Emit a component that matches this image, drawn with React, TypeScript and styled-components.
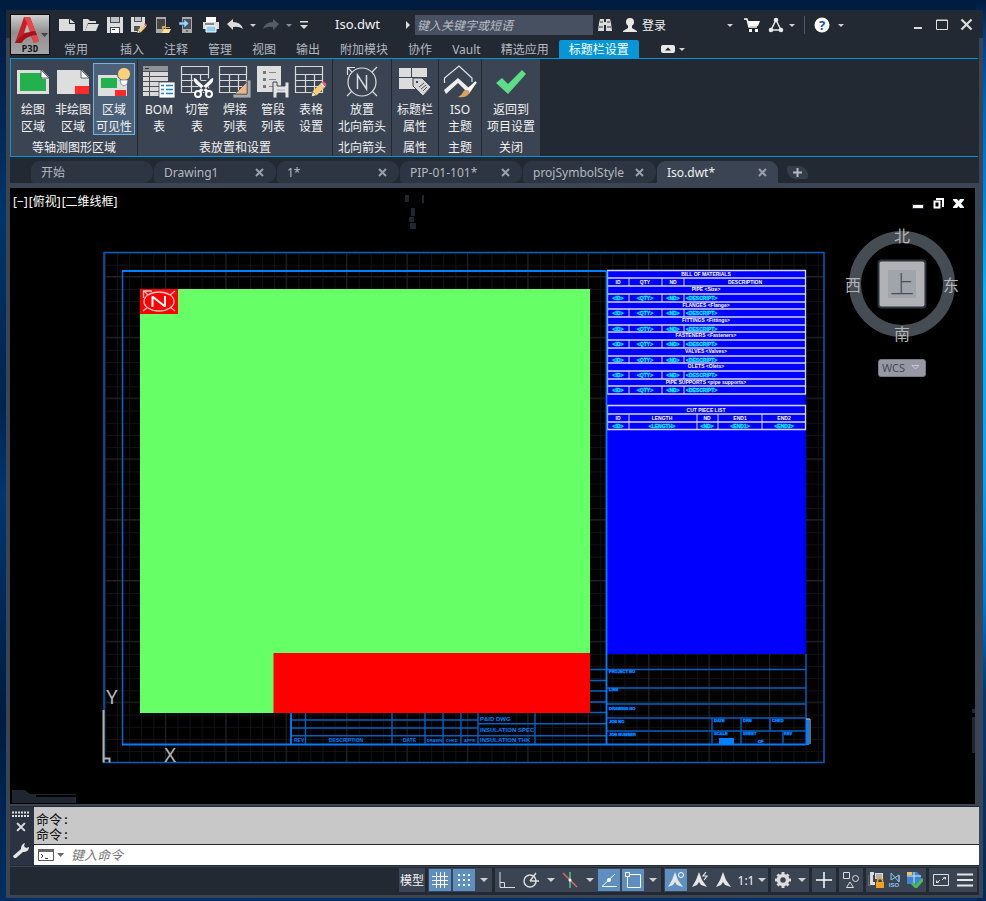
import React from "react";
import styled, { createGlobalStyle, css } from "styled-components";

const c = {
  dark: "#222933",
  panel: "#3b4453",
  accent: "#0696d7",
  tab: "#2d3542",
  select: "#5f8ec1",
  text: "#f2f2f2",
  muted: "#b4b9c0",
  icon: "#dcdcdc",
};

const sans = `"Noto Sans", "Noto Sans CJK SC", sans-serif`;

const GlobalStyle = createGlobalStyle`
  * { box-sizing: border-box; }
  body { margin: 0; font-family: ${sans}; font-size: 12px; color: ${c.text}; }
  button, input { font: inherit; color: inherit; }
  button { border: 0; padding: 0; margin: 0; background: none; cursor: pointer; white-space: nowrap; }
  svg { display: block; flex: none; }
`;

const Desktop = styled.div`
  min-height: 100vh;
  display: flex;
  flex-direction: column;
  padding: 10px 3px 3px 6px;
  background:
    linear-gradient(180deg, #001c40 0, #003a78 30px, #0062b5 100px, #0080dc 190px, #00b4f4 290px, #0a9ff0 480px, #0078d0 600px, #003a78 690px, #002a5c 100%) right / 10px 100% no-repeat,
    linear-gradient(180deg, #001c3f 0, #002350 10%, #003568 24%, #002450 45%, #01366e 55%, #001b40 80%, #002f63 100%);
`;

const Window = styled.main`
  flex: 1;
  display: flex;
  flex-direction: column;
  padding: 0 4px 3px;
  background: linear-gradient(${c.dark} 28px, ${c.panel} 28px);
`;

const Header = styled.header`
  display: flex;
  height: 48px;
  background: ${c.dark};
`;

const AppButton = styled.button`
  width: 40px;
  height: 41px;
  margin-top: 4px;
  border: 1px solid #0b0d10;
  background: linear-gradient(#d0d0d0, #8f8f8f 45%, #a5a5a5);
`;

const HeaderRows = styled.div`
  flex: 1;
  display: flex;
  flex-direction: column;
  justify-content: space-between;
  padding-left: 4px;
  min-width: 0;
`;

const TitleRow = styled.div`
  display: flex;
  align-items: center;
  height: 30px;
`;

const Tools = styled.div<{ $start?: number }>`
  display: flex;
  align-items: center;
  margin-left: ${(p) => p.$start ?? 0}px;
`;

const ToolButton = styled.button<{ $w?: number }>`
  display: flex;
  align-items: center;
  justify-content: center;
  width: ${(p) => p.$w ?? 24}px;
  height: 24px;
`;

const DocTitle = styled.h1`
  margin: 0 0 2px 23px;
  width: 65px;
  font-size: 13px;
  line-height: 20px;
  font-weight: 400;
`;

const Search = styled.input`
  width: 178px;
  height: 20px;
  padding: 0 2px;
  border: 0;
  border-radius: 0;
  background: #475060;
  font-style: italic;
  outline: 0;
  &::placeholder { color: #b9bec6; opacity: 1; }
`;

const SignIn = styled.button`
  display: flex;
  align-items: center;
  gap: 5px;
  width: 56px;
  margin-left: 6px;
`;

const Divider = styled.span`
  width: 1px;
  height: 18px;
  background: #4c586b;
`;

const WindowControls = styled.div`
  display: flex;
  align-items: center;
  margin: 0 1px 2px auto;
`;

const MenuTabs = styled.nav`
  display: flex;
  align-items: stretch;
  height: 18px;
`;

const MenuTab = styled.button<{ $active?: boolean; $wide?: boolean }>`
  padding: 0 10px;
  margin-right: ${(p) => (p.$wide ? 12 : 0)}px;
  line-height: 20px;
  color: ${(p) => (p.$active ? "#fff" : c.muted)};
  background: ${(p) => (p.$active ? c.accent : "transparent")};
  border-radius: 2px 2px 0 0;
`;

const Ribbon = styled.section`
  display: flex;
  gap: 1px;
  width: calc(100% - 1px);
  border: 1px solid ${c.accent};
  border-right: 0;
  background: ${c.dark};
  box-shadow: 1px 0 0 ${c.dark};
`;

const Panel = styled.div`
  display: flex;
  flex-direction: column;
  align-items: center;
  padding: 4px 2px 0;
  height: 97px;
  background: ${c.panel};
`;

const PanelButtons = styled.div`
  display: flex;
`;

const PanelTitle = styled.div`
  margin-top: 4px;
  line-height: 17px;
`;

const RibbonButton = styled.button<{ $w: number; $on?: boolean }>`
  display: flex;
  flex-direction: column;
  align-items: center;
  width: ${(p) => p.$w}px;
  height: 72px;
  padding-top: 1px;
  line-height: 17px;
  border: 1px solid ${(p) => (p.$on ? "#6cb4e8" : "transparent")};
  background: ${(p) => (p.$on ? "#4b6079" : "transparent")};
  svg { margin-bottom: 4px; overflow: visible; }
`;

const FileTabs = styled.nav`
  display: flex;
  align-items: flex-end;
  height: 26px;
  padding-left: 20px;
  background: ${c.dark};
`;

const FileTab = styled.div<{ $w: number; $active?: boolean }>`
  display: flex;
  align-items: center;
  justify-content: space-between;
  width: ${(p) => p.$w}px;
  height: 22px;
  padding: 0 12px 0 10px;
  border-left: 1px solid ${c.dark};
  border-radius: 9px 10px 10px 4px;
  background: ${c.tab};
  color: ${c.muted};
  ${(p) =>
    p.$active &&
    css`
      background: ${c.panel};
      color: #f0f0f0;
      border-radius: 9px 9px 0 0;
      padding-right: 11px;
    `}
`;

const TabName = styled.button`
  line-height: 22px;
  padding-top: 2px;
`;

const TabClose = styled.button`
  display: flex;
  width: 10px;
  justify-content: center;
`;

const NewTab = styled.button`
  display: flex;
  align-items: center;
  justify-content: center;
  width: 21px;
  height: 13px;
  margin: 0 0 4px 9px;
  border-radius: 2px 9px 2px 9px;
  background: #343d4a;
`;

const Workspace = styled.section`
  flex: 1;
  position: relative;
  min-height: 400px;
  margin: 5px 4px 2px 0;
  background: #000;
`;

const Drawing = styled.svg`
  position: absolute;
  inset: 0;
  width: 100%;
  height: 100%;
`;

const ViewLabels = styled.div`
  position: absolute;
  top: 5px;
  left: 3px;
  display: flex;
  gap: 1px;
  button { line-height: 18px; color: #fff; }
`;

const ViewControls = styled.div`
  position: absolute;
  top: 8px;
  right: 7px;
  display: flex;
  button { width: 20px; height: 16px; }
`;

const Compass = styled.div`
  position: absolute;
  top: 32px;
  right: 15px;
  display: flex;
  flex-direction: column;
  align-items: center;
`;

const Wcs = styled.button`
  display: flex;
  align-items: center;
  justify-content: space-between;
  width: 48px;
  height: 18px;
  margin-top: 15px;
  padding: 0 5px 2px 3px;
  font-size: 11px;
  border: 1px solid #777884;
  border-radius: 3px;
  background: #9798a4;
  color: #484a52;
`;

const Command = styled.section`
  display: flex;
  height: 60px;
  border: solid ${c.dark};
  border-width: 1px 0 1px 0;
`;

const CommandHandle = styled.div`
  display: flex;
  flex-direction: column;
  align-items: center;
  gap: 5px;
  width: 24px;
  padding: 4px 3px 6px 0;
  background: #2c3340;
  button { display: flex; }
  button:last-child { margin-top: auto; }
`;

const CommandBody = styled.div`
  flex: 1;
  display: flex;
  flex-direction: column;
  color: #111;
`;

const History = styled.div`
  height: 37px;
  padding: 5px 2px 0;
  font: 13px/15px "DejaVu Sans Mono", "Noto Sans CJK SC", monospace;
  background: #c8c8c8;
`;

const Prompt = styled.label`
  display: flex;
  align-items: center;
  height: 21px;
  border-top: 1px solid ${c.dark};
  padding-left: 4px;
  gap: 7px;
  background: #fff;
`;

const CommandInput = styled.input`
  flex: 1;
  border: 0;
  padding: 0;
  outline: 0;
  height: 18px;
  font-size: 13px;
  font-style: italic;
  background: transparent;
  &::placeholder { color: #777; opacity: 1; }
`;

const StatusBar = styled.footer`
  display: flex;
  justify-content: flex-end;
  align-items: center;
  gap: 3px;
  height: 28px;
  margin-top: 1px;
  padding: 0 2px 2px 0;
  background: ${c.dark};
`;

const StatusGroup = styled.div`
  display: flex;
  align-items: center;
  gap: 2px;
  height: 24px;
  padding: 0 1px;
  background: ${c.panel};
`;

const StatusButton = styled.button<{ $w?: number; $on?: boolean }>`
  display: flex;
  align-items: center;
  justify-content: center;
  width: ${(p) => p.$w ?? 22}px;
  height: 22px;
  background: ${(p) => (p.$on ? c.select : "transparent")};
`;

const Caret = ({ s = 3, color = "#d0d0d0" }: { s?: number; color?: string }) => (
  <svg width={s * 2} height={s} viewBox="0 0 6 3">
    <path d="M0 0h6L3 3z" fill={color} />
  </svg>
);

const Glyph = ({ w = 16, h = 16, children }: { w?: number; h?: number; children: React.ReactNode }) => (
  <svg width={w} height={h} viewBox={`0 0 ${w} ${h}`} fill="none">
    {children}
  </svg>
);

const Pencil = ({ x, y, k = 1 }: { x: number; y: number; k?: number }) => (
  <g transform={`translate(${x} ${y}) scale(${k})`}>
    <path d="M0 16 1.5 10.5 5.5 14.5z" fill="#f4ead5" stroke="#333" strokeWidth=".8" />
    <path d="M1.5 10.5 9 3l4 4-7.500 7.500z" fill="#f7cf73" />
    <path d="M9 3 10.500 1.500l4 4L13 7z" fill="#e8e8e8" />
    <path d="M10.500 1.500Q12 0 13.500 1l1.500 1.500Q16 4 14.500 5.500z" fill="#f25b66" />
  </g>
);

const quick: { name: string; icon: React.ReactNode }[] = [
  { name: "新建", icon: <Glyph><path d="M0 2h10v5h6v7H0z" fill={c.icon} /><path d="M11 2l5 4h-5z" fill={c.icon} /></Glyph> },
  { name: "打开", icon: <Glyph><path d="M0 14V2h5l2 2h6v2H5L2 14z" fill={c.icon} /><path d="M5 7h11l-3 7H2z" fill={c.icon} /></Glyph> },
  { name: "保存", icon: <Glyph><path d="M0 0h16v16H0z" fill={c.icon} /><path d="M3 0h10v6H3zM3 10h10v6H3z" fill="#424a55" /><path d="M4 0h8v5H4z" fill="#bfc1c4" /><path d="M4 11h8v5H4z" fill="#fff" /><path d="M5 12.500h3" stroke="#333" /></Glyph> },
  { name: "另存为", icon: <Glyph><path d="M0 0h14v7l-6 8H0z" fill={c.icon} /><path d="M3 0h8v5H3zM3 9h6v5H3z" fill="#4d555f" /><path d="M4 0h6v4H4z" fill="#bfc1c4" /><Pencil x={6} y={6} k={0.65} /></Glyph> },
  { name: "从移动设备打开", icon: <Glyph><path d="M1 0h10v16H1z" fill="#aaa" /><path d="M2 2h8v10H2z" fill="#444" /><path d="M7 9h3l1 1h4v1H9l-2 5z" fill="#d8a95b" /><path d="M9 12h7l-2 4H7z" fill="#ffdd9b" /></Glyph> },
  { name: "保存到移动设备", icon: <Glyph><path d="M3 0h10v16H3z" fill="#aaa" /><path d="M4 2h8v10H4z" fill="#4b5058" /><path d="M0 5h5V2l5 4.500L5 11V8H0z" fill="#9bd5fa" stroke="#1b4c7a" strokeWidth=".6" /><path d="M7 14h2" stroke="#333" /></Glyph> },
  { name: "打印", icon: <Glyph><path d="M3 0h10v5H3z" fill="#fff" /><path d="M0 5h16v7H0z" fill={c.icon} /><path d="M2 7h9" stroke="#333" /><path d="M3 9h10v6H3z" fill="#8fcdf7" stroke="#fff" /></Glyph> },
  { name: "放弃", icon: <Glyph><path d="M0 7 6 2v3q8 0 10 7-4-3-10-2v3z" fill={c.icon} /></Glyph> },
];

const TableIcon = () => (
  <g stroke="#d9d9d9" strokeWidth="1.200">
    <path d="M.5 1.500h27v26H.5zM.5 9.500h27M.5 15.500h27M.5 21.500h27M10.500 9.500v18M19.500 9.500v18" fill="none" />
  </g>
);

const icons = {
  draw: <Glyph w={32} h={32}><path d="M0 5h25l7 7v17H0z" fill="#dedede" /><path d="M3 8h22v6h4v12H3z" fill="#22b14c" /><path d="M24 5v8h8z" fill="#fff" stroke="#3b4453" strokeWidth=".8" /></Glyph>,
  nodraw: <Glyph w={32} h={32}><path d="M0 5h25l7 7v17H0z" fill="#dedede" /><path d="M18 21h14v8H18z" fill="#ff2a2a" /><path d="M24 5v8h8z" fill="#fff" stroke="#3b4453" strokeWidth=".8" /></Glyph>,
  visible: <Glyph w={32} h={32}><path d="M0 10h29v21H0z" fill="#dedede" /><path d="M3 13h16v10H3z" fill="#22b14c" /><path d="M17 25h11v6H17z" fill="#ff2a2a" /><circle cx="26" cy="9" r="6.500" fill="#ffd07a" stroke="#4b6079" /><path d="M22 15h8l-1 4-3 2-3-2z" fill="#fff" stroke="#4b6079" strokeWidth=".6" /></Glyph>,
  bom: <Glyph w={32} h={32}><path d="M0 1h25v30H0z" fill="#d9d9d9" /><path d="M0 1h25v5H0z" fill="#8e9197" /><path d="M0 6.500h25M0 11.500h25M0 16.500h25M0 21.500h25M0 26.500h25M6.500 6v25" stroke="#4a4f58" /><path d="M2 3.500h4" stroke="#333" /><path d="M16 17h16v16H16z" fill="#fff" stroke="#3b4453" strokeWidth=".8" /><path d="M18 20.500h3M18 24.500h3M18 28.500h3M23 20.500h7M23 24.500h7M23 28.500h7" stroke="#1982cf" strokeWidth="1.500" /></Glyph>,
  cut: <Glyph w={32} h={32}><TableIcon /><g stroke="#3b4453" strokeWidth="6"><path d="M14 14l13 13M31 14 18 27" /></g><path d="M13 13q2 0 4 3l11 10-2 2L15 19q-3-3-2-6zM32 13q-2 0-4 3L17 26l2 2 11-9q3-3 2-6z" fill="#fff" /><circle cx="17" cy="29" r="3" stroke="#fff" strokeWidth="2" fill={c.panel} /><circle cx="28" cy="29" r="3" stroke="#fff" strokeWidth="2" fill={c.panel} /></Glyph>,
  weld: <Glyph w={32} h={32}><TableIcon /><path d="M28 15h4v18H14v-4h14z" fill="#aaa" stroke="#3b4453" strokeWidth=".8" /><path d="M28 17v12H16z" fill="#f0b489" stroke="#3b4453" strokeWidth=".6" /></Glyph>,
  spool: <Glyph w={32} h={32}><path d="M0 1h24v26H0z" fill="#dedede" /><path d="M6 6h3v3H6zM6 13h3v3H6zM6 20h3v3H6z" fill="#777" /><path d="M12 7.500h7M12 14.500h7M12 21.500h4" stroke="#888" /><path d="M16 17h4v4h8v-4h4v16h-4v-5h-8v5h-4z" fill="#e3e3e3" stroke="#3b4453" /><path d="M20 25h8" stroke="#aaa" /></Glyph>,
  tableSet: <Glyph w={32} h={32}><TableIcon /><Pencil x={16} y={16} /></Glyph>,
  north: <Glyph w={32} h={32}><g stroke="#dcdcdc" strokeWidth="1.200"><circle cx="16" cy="17" r="14" /><path d="M1.500 10V2.500H9M26 7l5-5M1 31l5-5M31 31l-5-5M2 3l4 4" /><path d="M11.500 24V10l9 14V10" strokeWidth="1.500" /></g></Glyph>,
  title: <Glyph w={32} h={32}><path d="M0 3h12v9H0zM13 3h15v9H13zM0 13h17v11H0z" fill="#dcdcdc" /><path d="M14 13h9l9 9-8 9-10-10z" fill="#d6d6d6" stroke={c.panel} /><path d="M17 16h2v2h-2z" fill={c.panel} /><path d="M20 22l5-4M22 24l5-4M24 26l4-4" stroke="#555" /></Glyph>,
  iso: <Glyph w={32} h={32}><path d="M.5 18V13L15 1l13 12v4" stroke="#e4e4e4" strokeWidth="1.200" /><path d="M0 25 14 13l11 10-3 3-8-8L2 29z" fill="#eee" /><path d="M32 17 23 25l2 2z" fill="#fff" stroke="#fff" strokeWidth="2" /><path d="M24 25q3 2 0 5-3 3-10 2 4-2 5-5 2-3 5-2z" fill="#d9a45f" /></Glyph>,
  check: <Glyph w={32} h={32}><path d="M1 18l6-5 6 6L27 5l4 4-18 20z" fill="#5fdc88" /></Glyph>,
};

type Btn = { l: [string, string]; icon: React.ReactNode; w: number; on?: boolean };
const panels: { title: string; buttons: Btn[] }[] = [
  { title: "等轴测图形区域", buttons: [
    { l: ["绘图", "区域"], icon: icons.draw, w: 40 },
    { l: ["非绘图", "区域"], icon: icons.nodraw, w: 40 },
    { l: ["区域", "可见性"], icon: icons.visible, w: 42, on: true },
  ] },
  { title: "表放置和设置", buttons: [
    { l: ["BOM", "表"], icon: icons.bom, w: 38 },
    { l: ["切管", "表"], icon: icons.cut, w: 38 },
    { l: ["焊接", "列表"], icon: icons.weld, w: 38 },
    { l: ["管段", "列表"], icon: icons.spool, w: 38 },
    { l: ["表格", "设置"], icon: icons.tableSet, w: 38 },
  ] },
  { title: "北向箭头", buttons: [{ l: ["放置", "北向箭头"], icon: icons.north, w: 54 }] },
  { title: "属性", buttons: [{ l: ["标题栏", "属性"], icon: icons.title, w: 42 }] },
  { title: "主题", buttons: [{ l: ["ISO", "主题"], icon: icons.iso, w: 38 }] },
  { title: "关闭", buttons: [{ l: ["返回到", "项目设置"], icon: icons.check, w: 54 }] },
];

const menu = ["常用", "插入", "注释", "管理", "视图", "输出", "附加模块", "协作", "Vault", "精选应用", "标题栏设置"];

const files = [
  { name: "开始", w: 123 },
  { name: "Drawing1", w: 123 },
  { name: "1*", w: 123 },
  { name: "PIP-01-101*", w: 123 },
  { name: "projSymbolStyle", w: 134 },
  { name: "Iso.dwt*", w: 122 },
];

const bomRows = [
  "BILL OF MATERIALS", "", "PIPE <Size>", "", "FLANGES <Flange>", "", "FITTINGS <Fittings>", "",
  "FASTENERS <Fasteners>", "", "VALVES <Valves>", "", "OLETS <Olets>", "", "PIPE SUPPORTS <pipe supports>", "",
];
const rowY = [271, 278, 286, 294, 302, 309, 317, 325, 332, 340, 348, 356, 363, 371, 379, 386, 394];

const IsoDrawing = () => (
  <Drawing viewBox="10 188 965 616" preserveAspectRatio="xMidYMid meet">
    <defs>
      <pattern id="minor" x="105" y="252.600" width="12.080" height="12.160" patternUnits="userSpaceOnUse">
        <path d="M0 .5H13M.5 0V13" stroke="#121216" />
      </pattern>
      <pattern id="major" x="104.500" y="276" width="60.400" height="60.800" patternUnits="userSpaceOnUse">
        <path d="M0 .5H61M.5 0V61" stroke="#222226" />
      </pattern>
    </defs>
    <path fill="url(#minor)" d="M104 252h720v510H104z" />
    <path fill="url(#major)" d="M104 252h720v510H104z" />
    <path d="M104 252.500h720v510H104z" fill="none" stroke="#0060c0" strokeWidth="1.500" />
    <path d="M122.500 271V744" stroke="#0068d0" strokeWidth="1.500" />
    <path d="M122 271H607M122 744.500H806" stroke="#0080ff" strokeWidth="2" />
    <path fill="#66ff66" d="M140 289h450v424H140z" />
    <path fill="#f00" d="M273.500 653H590v60H273.500z" />

    <path fill="#f00" d="M140 289h38v25h-38z" />
    <g stroke="#ffc4c4" fill="none" strokeWidth="1.300">
      <ellipse cx="159" cy="301.500" rx="15" ry="9.500" />
      <path d="M143.500 298v-7H152M170 295l5-4M143 311l5-4M175 311l-5-4M144 291l4 4" />
      <path d="M152.500 307V296.500L165 306.500V296" stroke="#fff" strokeWidth="2" strokeLinejoin="bevel" />
    </g>

    <path fill="#00f" d="M606 270h200v384H606z" />
    <g stroke="#d5d5ff" fill="none">
      <path d="M607.500 270.500H805.500V394H607.500zM607.500 405.500H805.500V429.500H607.500zM607 414H806M607 422H806" strokeWidth="1.300" />
      {rowY.slice(1, -1).map((y) => <path key={y} d={`M607 ${y}H806`} strokeWidth="1.300" />)}
      {rowY.filter((_, i) => i % 2 === 1).map((y) => <path key={y} d={`M629 ${y}v8M662 ${y}v8M684 ${y}v8`} />)}
      <path d="M629 414v16M697 414v16M718 414v16M762 414v16" />
    </g>
    <g fill="#fff" fontFamily="Liberation Sans" fontSize="5" fontWeight="700" textAnchor="middle">
      {bomRows.map((t, i) => t && <text key={t} x="706" y={rowY[i] + 5}>{t}</text>)}
      <text x="618" y="284">ID</text><text x="645" y="284">QTY</text><text x="673" y="284">ND</text><text x="745" y="284">DESCRIPTION</text>
      <text x="706" y="412">CUT PIECE LIST</text>
      <text x="618" y="420">ID</text><text x="662" y="420">LENGTH</text><text x="707" y="420">ND</text><text x="740" y="420">END1</text><text x="784" y="420">END2</text>
      <g fill="#00f0ff" stroke="#00f0ff" strokeWidth=".3">
        {[3, 5, 7, 9, 11, 13, 15].map((i) => (
          <g key={i}>
            <text x="618" y={rowY[i] + 6}>&lt;ID&gt;</text>
            <text x="645" y={rowY[i] + 6}>&lt;QTY&gt;</text>
            <text x="673" y={rowY[i] + 6}>&lt;ND&gt;</text>
            <text x="686" y={rowY[i] + 6} textAnchor="start">&lt;DESCRIPT&gt;</text>
          </g>
        ))}
        <text x="618" y="428">&lt;ID&gt;</text><text x="662" y="428">&lt;LENGTH&gt;</text><text x="707" y="428">&lt;ND&gt;</text><text x="740" y="428">&lt;END1&gt;</text><text x="784" y="428">&lt;END2&gt;</text>
      </g>
    </g>

    <g stroke="#0062c4" strokeWidth="1.400" fill="none">
      <path d="M806 654v91M607 669.500h199M607 688h199M607 704h199M607 718h199M607 731h199M712 718v26M741 718v26M770 718v13M783 731v13" />
      <path d="M590 669.500h17M590 680.500h17M590 691h17M590 702h17M590 712.500h17M478 723.700h129M478 735.700h129" />
      <path d="M291 720h187M291 728h187M291 735.700h187M305.500 713v31M392 713v31M425 713v31M443 713v31M461 713v31M478 713v31M535 713v31" />
      <path d="M606.500 271v474M291 713v31" stroke="#0080ff" strokeWidth="1.800" />
    </g>
    <g fill="#0080ff" fontFamily="Liberation Sans" fontSize="5" fontWeight="700">
      <text x="294" y="742">REV</text><text x="329" y="742">DESCRIPTION</text><text x="403" y="742">DATE</text>
      <g fontSize="4">
        <text x="427" y="742">DRAWN</text><text x="446" y="742">CHKD</text><text x="464" y="742">APPR</text>
      </g>
      <g fontSize="6">
        <text x="480" y="721">P&amp;ID DWG</text><text x="480" y="732">INSULATION SPEC</text><text x="480" y="742">INSULATION THK</text>
      </g>
      <g fontSize="4" stroke="#0080ff" strokeWidth=".4">
        <text x="609" y="673">PROJECT NO</text><text x="609" y="691">LINE</text><text x="609" y="710">DRAWING NO</text>
        <text x="609" y="723">JOB NO</text><text x="609" y="736">JOB NUMBER</text><text x="714" y="722">DATE</text>
        <text x="743" y="722">DRN</text><text x="772" y="722">CHKD</text><text x="714" y="735">SCALE</text>
        <text x="743" y="735">SHEET</text><text x="784" y="735">REV</text><text x="758" y="743">OF</text>
      </g>
      <path d="M719 738h15v6h-15zM806 719h3v26h-3z" />
      <path d="M806 719h4v25" fill="none" stroke="#c8d4e4" />
    </g>

    <path d="M103.500 710v52.500M104 758.500h5.500v4" stroke="#b0b0b0" strokeWidth="2" fill="none" />
    <g fill="#b5b5b5" fontFamily="Noto Sans" fontSize="20" textAnchor="middle">
      <text x="112" y="704">Y</text><text x="170" y="762">X</text>
    </g>
    <path d="M405 195h4v7h-4zM422 195h2v8h-2zM411 208h4v8h-4zM409 217h5v5h-5zM410 223h6v6h-6zM12 790h13l5 4h46v1H36v2h40v6H12zM972 709h3v4h-3zM972 717h3v36h-3z" fill="#1f262f" />
  </Drawing>
);

const Cross = ({ s = 9, w = 2, color = "#9aa0a8" }) => (
  <svg width={s} height={s} viewBox="0 0 9 9"><path d="M1 1l7 7M8 1 1 8" stroke={color} strokeWidth={w} /></svg>
);

const Annot = ({ extra }: { extra?: React.ReactNode }) => (
  <Glyph w={18} h={18}>
    <path d="M8 1l3 8 5 7-6-2-2-3-2 3-5 2 4-7z" fill="#e6e6e6" />
    {extra}
  </Glyph>
);

const StatusCaret = ({ w = 16 }: { w?: number }) => (
  <StatusButton $w={w} aria-label="展开"><Caret s={4} /></StatusButton>
);

export default function App() {
  return (
    <Desktop>
      <GlobalStyle />
      <Window>
        <Header>
          <AppButton aria-label="应用程序菜单">
            <svg width="38" height="39" viewBox="0 0 38 39">
              <path d="M4 28 13 2h6l9 24-5 2-3-7q-6 0-9 7z" fill="#c8202b" />
              <path d="M13 2h6l9 24-5 2L16 8z" fill="#e5474d" />
              <path d="M4 28q8-12 20-12l2 4q-10 0-16 8z" fill="#a5121c" />
              <path d="M16 9l3 8-6 1z" fill="#b9b9b9" />
              <path d="M30 18h7l-3.500 4z" fill="#444" />
              <text x="19" y="37" fontFamily="DejaVu Sans Mono" fontSize="9" fontWeight="700" textAnchor="middle" fill="#111">P3D</text>
            </svg>
          </AppButton>
          <HeaderRows>
            <TitleRow>
              <Tools $start={1}>
                {quick.map((q) => <ToolButton key={q.name} aria-label={q.name}>{q.icon}</ToolButton>)}
                <ToolButton $w={12} aria-label="放弃列表"><Caret /></ToolButton>
                <ToolButton aria-label="重做"><Glyph><path d="M16 7 10 2v3Q2 5 0 12q4-3 10-2v3z" fill="#555c66" /></Glyph></ToolButton>
                <ToolButton $w={12} aria-label="重做列表"><Caret color="#8a8f97" /></ToolButton>
                <ToolButton $w={17} aria-label="自定义"><Glyph w={8} h={8}><path d="M0 0h8v1.500H0zM0 4h8L4 8z" fill={c.icon} /></Glyph></ToolButton>
              </Tools>
              <DocTitle>Iso.dwt</DocTitle>
              <ToolButton $w={15} aria-label="显示"><Glyph w={4} h={8}><path d="M0 0l4 4-4 4z" fill={c.icon} /></Glyph></ToolButton>
              <Search placeholder="键入关键字或短语" aria-label="搜索" />
              <ToolButton aria-label="查找"><Glyph><path d="M3 2h4v3h2V2h4l1 4 1 8H9V8H7v6H1l1-8z" fill={c.icon} /><path d="M2 10h4M10 10h4M3 5h3M10 5h3" stroke="#333" /></Glyph></ToolButton>
              <SignIn>
                <Glyph w={14} h={16}><circle cx="7" cy="5" r="4" fill="#e8e8e8" /><path d="M5 8h4v3l5 3v1H0v-1l5-3z" fill="#e8e8e8" /></Glyph>
                登录
              </SignIn>
              <Tools $start={45}>
                <ToolButton $w={12} aria-label="账户"><Caret /></ToolButton>
                <ToolButton $w={32} aria-label="商店"><Glyph><path d="M0 2h3l2 8h8" stroke="#fff" strokeWidth="1.500" /><path d="M4 4h12l-2 5H5z" fill="#fff" /><path d="M5 12h3v3H5zM11 12h3v3h-3z" fill="#fff" /></Glyph></ToolButton>
                <ToolButton $w={16} aria-label="连接"><Glyph><path d="M8 3l5 10H3z" stroke="#e8e8e8" strokeWidth="1.500" /><circle cx="8" cy="3" r="2.300" fill="#e8e8e8" /><circle cx="3" cy="13" r="2.300" fill="#e8e8e8" /><circle cx="13" cy="13" r="2.300" fill="#e8e8e8" /></Glyph></ToolButton>
                <ToolButton $w={16} aria-label="连接列表"><Caret /></ToolButton>
              </Tools>
              <Tools $start={4}>
                <Divider />
                <ToolButton $w={34} aria-label="帮助">
                  <Glyph><circle cx="8" cy="8" r="7.500" fill="#fff" /><text x="8" y="13" fontFamily="Noto Sans" fontSize="13" fontWeight="700" textAnchor="middle" fill="#1c4fa8">?</text></Glyph>
                </ToolButton>
                <ToolButton $w={4} aria-label="帮助列表"><Caret /></ToolButton>
              </Tools>
              <WindowControls>
                <ToolButton aria-label="最小化"><Glyph w={8} h={12}><path d="M0 9h8v2H0z" fill={c.icon} /></Glyph></ToolButton>
                <ToolButton aria-label="最大化"><Glyph w={12} h={11}><path d="M.5 1h11v9.500H.5zM.5 1.500h11" stroke={c.icon} /></Glyph></ToolButton>
                <ToolButton aria-label="关闭"><Cross s={13} w={1.500} color={c.icon} /></ToolButton>
              </WindowControls>
            </TitleRow>
            <MenuTabs>
              {menu.map((m, i) => <MenuTab key={m} $wide={i === 0} $active={i === 10}>{m}</MenuTab>)}
              <Tools $start={22}>
                <ToolButton $w={15} aria-label="最小化功能区"><Glyph w={14} h={8}><rect width="14" height="8" rx="2" fill="#e8e8e8" /><path d="M4 5.500 7 2.500l3 3z" fill="#222" /></Glyph></ToolButton>
                <ToolButton $w={13} aria-label="功能区选项"><Caret /></ToolButton>
              </Tools>
            </MenuTabs>
          </HeaderRows>
        </Header>

        <Ribbon>
          {panels.map((p) => (
            <Panel key={p.title}>
              <PanelButtons>
                {p.buttons.map((b) => (
                  <RibbonButton key={b.l.join()} $w={b.w} $on={b.on}>
                    {b.icon}
                    <span>{b.l[0]}</span>
                    <span>{b.l[1]}</span>
                  </RibbonButton>
                ))}
              </PanelButtons>
              <PanelTitle>{p.title}</PanelTitle>
            </Panel>
          ))}
        </Ribbon>

        <FileTabs>
          {files.map((f, i) => (
            <FileTab key={f.name} $w={f.w} $active={i === 5}>
              <TabName>{f.name}</TabName>
              {i > 0 && <TabClose aria-label={`关闭 ${f.name}`}><Cross /></TabClose>}
            </FileTab>
          ))}
          <NewTab aria-label="新图形"><Glyph w={9} h={9}><path d="M4.500 0v9M0 4.500h9" stroke="#b4b9c0" strokeWidth="2" /></Glyph></NewTab>
        </FileTabs>

        <Workspace>
          <IsoDrawing />
          <ViewLabels>
            <button>[−]</button><button>[俯视]</button><button>[二维线框]</button>
          </ViewLabels>
          <ViewControls>
            <button aria-label="最小化视图"><Glyph w={20}><path d="M4 8h12v5H4z" fill="#2a2f37" /><path d="M5 9h10v3H5z" fill="#fff" /></Glyph></button>
            <button aria-label="还原视图"><Glyph w={20}><path d="M8 3h7v8M6.500 5.500h5v6h-5z" stroke="#fff" strokeWidth="2" /></Glyph></button>
            <button aria-label="关闭视图"><Glyph w={20}><path d="M5 3h4l1.500 2L12 3h4v1l-3 3.500L16 11v1h-4l-1.500-2L9 12H5v-1l3-3.500L5 4z" fill="#fff" /></Glyph></button>
          </ViewControls>
          <Compass>
            <svg width="116" height="124" viewBox="0 -4 116 124">
              <circle cx="58" cy="60" r="47" fill="none" stroke="#454c54" strokeWidth="12" />
              <rect x="34.500" y="36.500" width="47" height="47" rx="3" fill="#b0b2b5" stroke="#2c333c" strokeWidth="2" />
              <path d="M44 46h28v28H44z" fill="#a0a5aa" />
              <text x="58" y="69" textAnchor="middle" fontFamily="Noto Sans CJK SC" fontWeight="300" fontSize="24" fill="#4a4e58">上</text>
              <g fontFamily="Noto Sans CJK SC" fontSize="16" fill="#b3b3b3" textAnchor="middle">
                <text x="58" y="18">北</text><text x="58" y="116">南</text><text x="9" y="67">西</text><text x="107" y="67">东</text>
              </g>
            </svg>
            <Wcs>WCS<svg width="9" height="5" viewBox="0 0 9 5"><path d="M1 .5h7L4.500 4z" fill="none" stroke="#c5c6ce" /></svg></Wcs>
          </Compass>
        </Workspace>

        <Command>
          <CommandHandle>
            <Glyph w={18} h={6}><path d="M0 1.500h18M0 5h18" stroke="#ddd" strokeWidth="2" strokeDasharray="2 1" /></Glyph>
            <button aria-label="关闭命令行"><Cross s={10} w={1.800} color="#e0e0e0" /></button>
            <button aria-label="自定义命令行"><Glyph><path d="M1 15 0 13l8-7q0-5 4-6l-1 3 2 2 3-1q0 5-6 5l-7 6z" fill="#e6e6e6" /></Glyph></button>
          </CommandHandle>
          <CommandBody>
            <History><div>命令:</div><div>命令:</div></History>
            <Prompt>
              <Glyph w={26} h={12}><path d="M.5.5h15v11H.5z" stroke="#555" /><path d="M0 0h16v3H0z" fill="#666" /><path d="M3 5l2 2-2 2M7 9.500h3" stroke="#444" /><path d="M19 4h7l-3.500 4z" fill="#666" /></Glyph>
              <CommandInput placeholder="键入命令" aria-label="命令" />
            </Prompt>
          </CommandBody>
        </Command>

        <StatusBar>
          <StatusGroup><StatusButton $w={24}>模型</StatusButton></StatusGroup>
          <StatusGroup>
            <StatusButton $on aria-label="栅格"><Glyph><path d="M4.500 0v16M8.500 0v16M12.500 0v16M0 4.500h16M0 8.500h16M0 12.500h16" stroke="#fff" /></Glyph></StatusButton>
            <StatusButton $on aria-label="捕捉"><Glyph w={14} h={14}><path d="M1 2h12M1 7h12M1 12h12" stroke="#fff" strokeWidth="2" strokeDasharray="2 3" /></Glyph></StatusButton>
            <StatusCaret w={14} />
          </StatusGroup>
          <StatusGroup>
            <StatusButton aria-label="正交"><Glyph><path d="M1 0v15.500h15M1 10.500h4.500v5" stroke={c.icon} /></Glyph></StatusButton>
            <StatusButton aria-label="极轴"><Glyph><circle cx="7" cy="9" r="6" stroke={c.icon} strokeWidth="1.500" /><path d="M7 9h9M7 9l6-8" stroke={c.icon} strokeWidth="1.500" /></Glyph></StatusButton>
            <StatusCaret w={13} />
            <StatusButton aria-label="等轴测草图"><Glyph><path d="M1 1l14 14" stroke="#d9696e" strokeWidth="1.500" /><path d="M8 0v16" stroke="#54c980" strokeWidth="1.500" /><circle cx="8" cy="8" r="1.500" fill="#fff" /></Glyph></StatusButton>
            <StatusCaret w={13} />
            <StatusButton $on aria-label="对象捕捉追踪"><Glyph><path d="M16 14.500H1L14 2" stroke="#fff" /><circle cx="8" cy="8" r="2" fill="#fff" /></Glyph></StatusButton>
            <StatusButton $on aria-label="对象捕捉"><Glyph><path d="M4 2.500h11.500v13H2.500V5M.5.500h4v4h-4z" stroke="#fff" /></Glyph></StatusButton>
            <StatusCaret w={14} />
          </StatusGroup>
          <StatusGroup>
            <StatusButton $on aria-label="注释可见性"><Annot extra={<circle cx="14" cy="4" r="2.500" stroke="#fff" />} /></StatusButton>
            <StatusButton aria-label="自动缩放"><Annot extra={<path d="M15 1l-3 4h4l-3 4" stroke="#e6e6e6" strokeWidth="1.200" />} /></StatusButton>
            <StatusButton aria-label="注释比例"><Annot /></StatusButton>
            <StatusButton $w={18}>1:1</StatusButton>
            <StatusCaret w={10} />
          </StatusGroup>
          <StatusGroup>
            <StatusButton aria-label="切换工作空间"><Glyph><g stroke={c.icon}><circle cx="8" cy="8" r="4.500" strokeWidth="3.500" /><path d="M8 0v3M8 13v3M0 8h3M13 8h3M2.500 2.500l2 2M11.500 11.500l2 2M13.500 2.500l-2 2M4.500 11.500l-2 2" strokeWidth="3" /></g></Glyph></StatusButton>
            <StatusCaret w={12} />
          </StatusGroup>
          <StatusGroup><StatusButton aria-label="注释监视器"><Glyph><path d="M8 0v16M0 8h16" stroke="#fff" strokeWidth="1.500" /></Glyph></StatusButton></StatusGroup>
          <StatusGroup><StatusButton aria-label="隔离对象"><Glyph><path d="M.5.500h6v6h-6zM7 10l3.500 5.500h-7z" stroke={c.icon} /><circle cx="12.500" cy="6.500" r="3" stroke={c.icon} /></Glyph></StatusButton></StatusGroup>
          <StatusGroup>
            <StatusButton $w={18} aria-label="锁定"><Glyph><path d="M6 0H2v13h5v-3H5V3h1zM7 1h8v6H7z" fill="#ddd" /><path d="M0 3v10h3M9 2v5M11 2v5M13 2v5" stroke="#888" /><path d="M9.500 10V8q2.500-3 5 0v2" stroke="#f5a21b" strokeWidth="1.500" /><path d="M8 10h8v6H8z" fill="#f5a21b" /></Glyph></StatusButton>
            <StatusButton $w={16} aria-label="ISO"><Glyph w={14}><path d="M3 1v7l8-5v7M3 1l8 9V3" stroke="#8bc7f0" /><text x="6" y="15" fontFamily="Liberation Sans" fontSize="6" fontWeight="700" textAnchor="middle" fill="#8bc7f0">ISO</text></Glyph></StatusButton>
            <StatusButton $w={20} aria-label="图形特性"><Glyph><path d="M0 0h10l4 4v8H0z" fill="#3d86cf" /><path d="M0 4h14M7 0v12" stroke="#d9e8f7" /><path d="M0 0h5v3H0z" fill="#f3c25d" /><path d="M5 11l4 4 7-8" stroke="#4cba58" strokeWidth="3" /></Glyph></StatusButton>
          </StatusGroup>
          <StatusGroup>
            <StatusButton aria-label="全屏显示"><Glyph><path d="M.5 2.500h15v11H.5z" stroke="#ddd" /><path d="M13 5v3l-3-3zM3 11V8l3 3z" fill="#ddd" /><path d="M9 8l2-2M5 10l2-2" stroke="#ddd" /></Glyph></StatusButton>
            <StatusButton aria-label="自定义"><Glyph><path d="M0 2.500h16M0 8h16M0 13.500h16" stroke="#e6e6e6" strokeWidth="1.800" /></Glyph></StatusButton>
          </StatusGroup>
        </StatusBar>
      </Window>
    </Desktop>
  );
}
